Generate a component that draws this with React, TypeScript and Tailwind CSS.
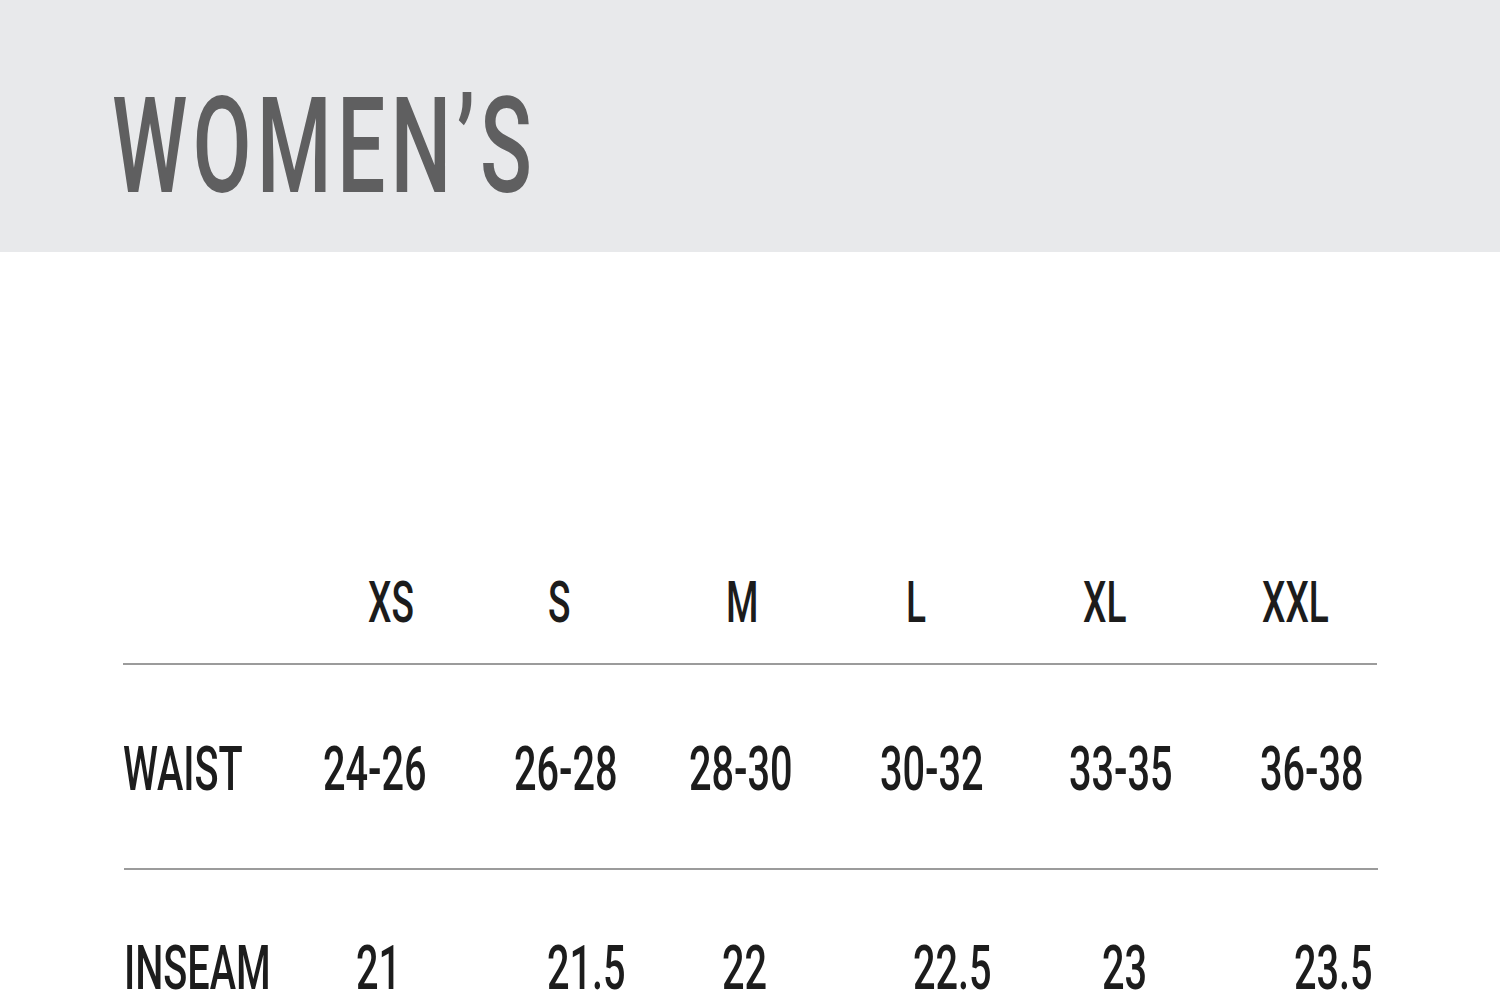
import React from "react";

const font = { fontFamily: "Roboto, 'Liberation Sans', sans-serif" };

function T({ children, className = "" }: { children: React.ReactNode; className?: string }) {
  return (
    <span className={`inline-block origin-left scale-x-[0.65] whitespace-nowrap ${className}`}>{children}</span>
  );
}

export default function App() {
  const header = [
    { w: "w-[245px]", t: "" },
    { w: "w-[180px]", t: "XS" },
    { w: "w-[178px]", t: "S" },
    { w: "w-[180px]", t: "M" },
    { w: "w-[177px]", t: "L" },
    { w: "w-[179px]", t: "XL" },
    { w: "w-[120px]", t: "XXL" },
  ];
  const waist = [
    { w: "w-[200px]", t: "WAIST" },
    { w: "w-[191px]", t: "24-26" },
    { w: "w-[175px]", t: "26-28" },
    { w: "w-[191px]", t: "28-30" },
    { w: "w-[189px]", t: "30-32" },
    { w: "w-[191px]", t: "33-35" },
    { w: "w-[120px]", t: "36-38" },
  ];
  const inseam = [
    { w: "w-[232px]", t: "INSEAM" },
    { w: "w-[191px]", t: "21" },
    { w: "w-[175px]", t: "21.5" },
    { w: "w-[191px]", t: "22" },
    { w: "w-[189px]", t: "22.5" },
    { w: "w-[192px]", t: "23" },
    { w: "w-[120px]", t: "23.5" },
  ];
  return (
    <div className="w-[1500px] h-[995px] overflow-hidden bg-white" style={font}>
      <div className="h-[252px] bg-[#e8e9eb] pl-[112px] pt-[80px]">
        <span className="inline-block origin-left scale-x-[0.64] whitespace-nowrap text-[134px] leading-none font-medium tracking-[8px] text-[#5f5f60]">
          WOMEN’S
        </span>
      </div>
      <div className="pl-[123px] text-[#1c1c1c] font-medium">
        <div className="mt-[322px] flex text-[57px] leading-none">
          {header.map((c, i) => (
            <div key={i} className={`${c.w} shrink-0`}>
              <T>{c.t}</T>
            </div>
          ))}
        </div>
        <div className="mt-[32px] w-[1254px] border-t-2 border-[#9b9b9b]" />
        <div className="mt-[74px] flex text-[61px] leading-none">
          {waist.map((c, i) => (
            <div key={i} className={`${c.w} shrink-0`}>
              <T>{c.t}</T>
            </div>
          ))}
        </div>
        <div className="mt-[68px] ml-px w-[1254px] border-t-2 border-[#9b9b9b]" />
        <div className="mt-[68px] pl-px flex text-[61px] leading-none">
          {inseam.map((c, i) => (
            <div key={i} className={`${c.w} shrink-0`}>
              <T>{c.t}</T>
            </div>
          ))}
        </div>
      </div>
    </div>
  );
}
